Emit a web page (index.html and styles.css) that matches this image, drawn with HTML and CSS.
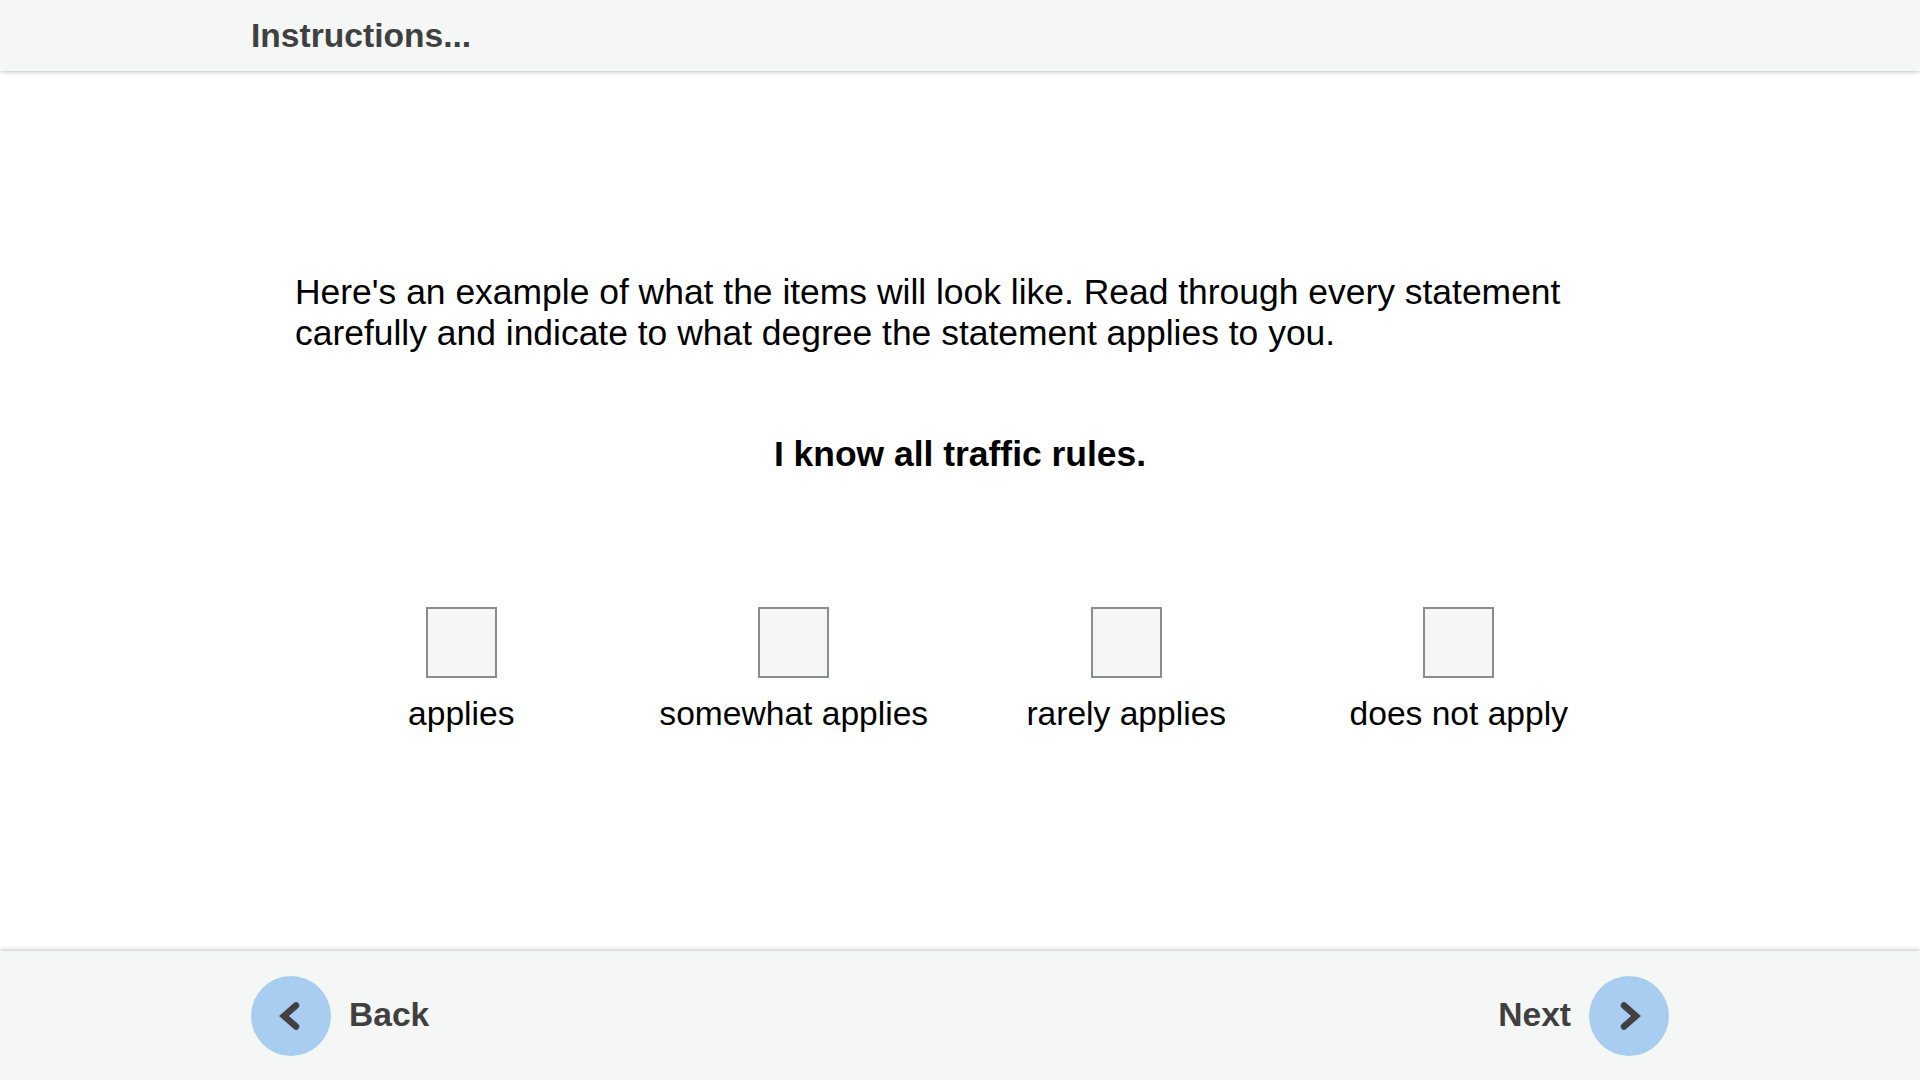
FILE: index.html
```html
<!DOCTYPE html>
<html lang="en">
<head>
<meta charset="utf-8">
<title>Instructions</title>
<link rel="stylesheet" href="styles.css">
</head>
<body>
<div class="page">
  <header class="topbar"><h1 class="title">Instructions...</h1></header>
  <main class="content">
    <p class="intro">Here's an example of what the items will look like. Read through every statement carefully and indicate to what degree the statement applies to you.</p>
    <p class="statement">I know all traffic rules.</p>
    <div class="options">
      <div class="option"><div class="box"></div><div class="label">applies</div></div>
      <div class="option"><div class="box"></div><div class="label">somewhat applies</div></div>
      <div class="option"><div class="box"></div><div class="label">rarely applies</div></div>
      <div class="option"><div class="box"></div><div class="label">does not apply</div></div>
    </div>
  </main>
  <footer class="bottombar">
    <div class="nav">
      <span class="circle"><svg class="chev" viewBox="0 0 24 28"><path d="M17 3.5 L5 14 L17 24.5"/></svg></span>
      <span class="navtext">Back</span>
    </div>
    <div class="nav">
      <span class="navtext">Next</span>
      <span class="circle"><svg class="chev" viewBox="0 0 24 28"><path d="M7 3.5 L19 14 L7 24.5"/></svg></span>
    </div>
  </footer>
</div>
</body>
</html>
```
FILE: styles.css
```css
* { box-sizing: border-box; }
html, body { margin: 0; height: 100%; }
body { font-family: "Liberation Sans", Arial, sans-serif; background: #fff; color: #000; }
.page { height: 1080px; display: flex; flex-direction: column; overflow: hidden; }
.topbar { height: 71px; background: #f5f7f7; padding-left: 251px; display: flex; align-items: center; box-shadow: 0 1px 4px rgba(0,0,0,0.25); position: relative; }
.title { margin: 0; font-size: 33.6px; font-weight: 700; color: #404040; }
.content { flex: 1; padding: 201px 295px 0; }
.intro { margin: 0; font-size: 35.45px; line-height: 41px; }
.statement { margin: 80px 0 0; font-size: 35.45px; line-height: 41px; font-weight: 700; text-align: center; }
.options { margin-top: 132px; display: grid; grid-template-columns: repeat(4, 1fr); }
.option { display: flex; flex-direction: column; align-items: center; }
.box { width: 71px; height: 71px; background: #f5f7f7; border: 2px solid #8c8c8c; }
.label { margin-top: 17px; font-size: 33.6px; line-height: 37px; white-space: nowrap; }
.bottombar { height: 129px; background: #f5f7f7; padding: 0 251px; display: flex; justify-content: space-between; align-items: center; box-shadow: 0 -1px 4px rgba(0,0,0,0.25); position: relative; }
.nav { display: flex; align-items: center; gap: 18px; }
.circle { width: 80px; height: 80px; border-radius: 50%; background: #a9cdf0; display: flex; align-items: center; justify-content: center; }
.chev { width: 24px; height: 28px; }
.chev path { fill: none; stroke: #404040; stroke-width: 6.5; stroke-linecap: round; stroke-linejoin: miter; }
.navtext { font-size: 33.6px; font-weight: 700; color: #404040; position: relative; top: -1px; }
```
